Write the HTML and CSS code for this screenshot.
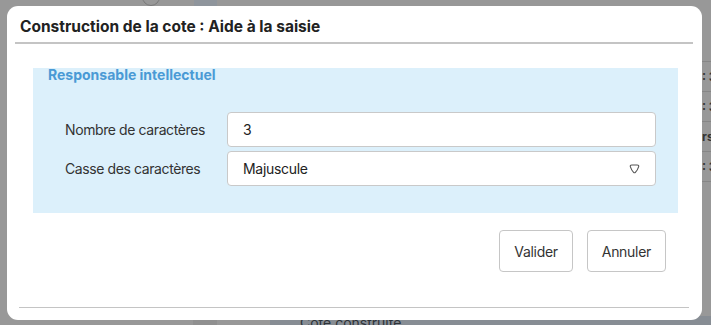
FILE: index.html
```html
<!DOCTYPE html>
<html lang="fr">
<head>
    <meta charset="UTF-8">
    <meta name="viewport" content="width=device-width, initial-scale=1.0">
    <title>Construction de la cote</title>
    <link rel="stylesheet" href="styles.css">
</head>
<body>
    <!-- page behind the overlay -->
    <div class="backdrop">
        <div class="bd-top">
            <span class="bd-icon"></span>
            <span class="bd-tab"></span>
        </div>
        <div class="bd-side">
            <div class="bd-row">: 3</div>
            <div class="bd-row">: 3</div>
            <div class="bd-row">rs</div>
            <div class="bd-row">: 3</div>
        </div>
        <div class="bd-bottom">
            <span class="bd-bottom-tab"></span>
            <span class="bd-bottom-text">Cote construite</span>
        </div>
    </div>

    <div class="modal">
        <div class="modal-header">
            <h1>Construction de la cote : Aide à la saisie</h1>
        </div>
        <div class="modal-body">
            <div class="panel">
                <div class="panel-title">Responsable intellectuel</div>
                <div class="form-row">
                    <label for="nb">Nombre de caractères</label>
                    <input id="nb" class="field" type="text" value="3">
                </div>
                <div class="form-row">
                    <label for="casse">Casse des caractères</label>
                    <div class="field select" id="casse">
                        <span>Majuscule</span>
                        <svg width="11" height="10" viewBox="0 0 11 10">
                            <path d="M1.3 2.6 Q1 1 2.8 1 H8.2 Q10 1 9.7 2.6 Q8.6 6 6.4 8.3 Q5.5 9.3 4.6 8.3 Q2.4 6 1.3 2.6 Z" fill="none" stroke="#555" stroke-width="1.1" stroke-linejoin="round"/>
                        </svg>
                    </div>
                </div>
            </div>
            <div class="actions">
                <button class="btn">Valider</button>
                <button class="btn">Annuler</button>
            </div>
        </div>
        <div class="modal-footer"></div>
    </div>
</body>
</html>
```

FILE: styles.css
```css
* {
    margin: 0;
    padding: 0;
    box-sizing: border-box;
}

body {
    width: 711px;
    height: 325px;
    overflow: hidden;
    background: #989898;
    font-family: Inter, "Noto Sans", sans-serif;
    color: #2b2b2b;
}

/* ---- page behind ---- */
.backdrop {
    height: 325px;
    display: flex;
    flex-direction: column;
}

.bd-top {
    height: 6px;
    display: flex;
}

.bd-icon {
    width: 18px;
    height: 18px;
    margin-left: 142px;
    margin-top: -12px;
    border: 1px solid #7a7a7a;
    border-radius: 50%;
}

.bd-tab {
    width: 23px;
    margin-left: 34px;
    background: #8f959c;
}

.bd-side {
    align-self: flex-end;
    width: 9px;
    margin-top: 55px;
    border-top: 1px solid #868686;
    font-size: 12px;
    font-weight: 700;
    color: #333;
    overflow: hidden;
}

.bd-row {
    height: 30px;
    line-height: 29px;
    border-bottom: 1px solid #868686;
    white-space: nowrap;
}

.bd-bottom {
    margin-top: auto;
    height: 6px;
    display: flex;
    font-size: 14px;
    line-height: 14px;
    color: #2e3338;
}

.bd-bottom-tab {
    width: 24px;
    margin-left: 193px;
    background: #909090;
}

.bd-bottom-text {
    flex: 1;
    margin-left: 53px;
    padding-left: 30px;
    margin-top: -3px;
    background: #878d94;
}

/* ---- modal ---- */
.modal {
    position: fixed;
    left: 7px;
    top: 6px;
    width: 695px;
    height: 314px;
    background: #fff;
    border-radius: 11px;
    display: flex;
    flex-direction: column;
}

.modal-header {
    margin: 0 9px 0 8px;
    padding: 12px 0 6px 5px;
    border-bottom: 2px solid #c4c4c4;
}

.modal-header h1 {
    font-size: 15.5px;
    font-weight: 700;
    line-height: 18px;
    color: #222;
}

.modal-body {
    flex: 1;
    padding: 27px 24px 0 26px;
}

.panel {
    background: #dcf0fb;
    height: 145px;
    padding: 0 22px 0 15px;
}

.panel-title {
    font-size: 14px;
    font-weight: 700;
    color: #4a9ad5;
    line-height: 14px;
    margin-top: -3px;
    margin-bottom: 30px;
}

.form-row {
    display: flex;
    align-items: center;
    margin-bottom: 4px;
}

.form-row label {
    width: 179px;
    padding-left: 17px;
    font-size: 14px;
    letter-spacing: -0.4px;
    color: #333;
}

.field {
    flex: 1;
    height: 35px;
    border: 1px solid #c9c9c9;
    border-radius: 4px;
    background: #fff;
    padding: 0 15px;
    font-family: inherit;
    font-size: 14px;
    letter-spacing: -0.3px;
    color: #222;
}

.select {
    display: flex;
    align-items: center;
    justify-content: space-between;
    padding-right: 15px;
}

.actions {
    display: flex;
    justify-content: flex-end;
    gap: 14px;
    margin-top: 17px;
    padding-right: 12px;
}

.btn {
    height: 42px;
    padding: 0 14px;
    border: 1px solid #c6c6c6;
    border-radius: 4px;
    background: #fff;
    font-family: inherit;
    font-size: 14px;
    letter-spacing: -0.3px;
    color: #333;
}

.modal-footer {
    margin: 0 13px 12px 12px;
    border-bottom: 1px solid #c4c4c4;
}
```
